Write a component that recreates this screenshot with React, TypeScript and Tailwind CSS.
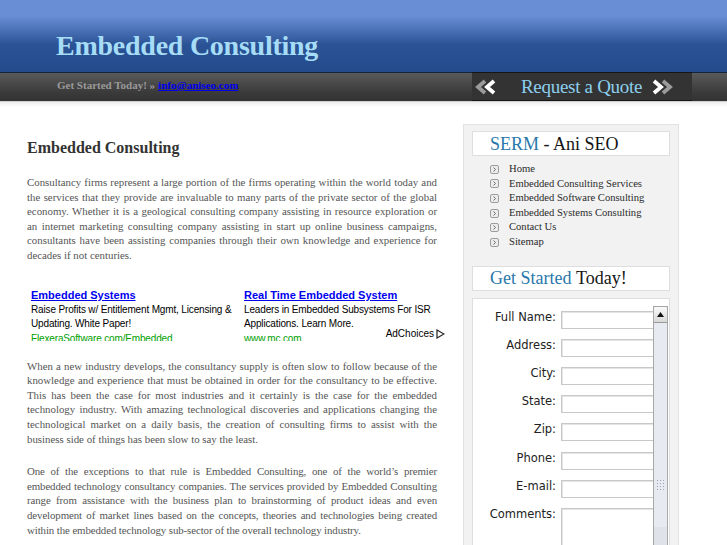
import React from 'react'

const menu = [
  'Home',
  'Embedded Consulting Services',
  'Embedded Software Consulting',
  'Embedded Systems Consulting',
  'Contact Us',
  'Sitemap',
]

const fields = ['Full Name:', 'Address:', 'City:', 'State:', 'Zip:', 'Phone:', 'E-mail:']

function Chevrons({ dir }: { dir: 'left' | 'right' }) {
  return (
    <svg width="24" height="16" viewBox="0 0 24 16" className="shrink-0">
      {dir === 'left' ? (
        <>
          <polyline points="11,2 4,8 11,14" fill="none" stroke="#9a9a9a" strokeWidth="3.8" />
          <polyline points="20,2 13,8 20,14" fill="none" stroke="#ffffff" strokeWidth="3.8" />
        </>
      ) : (
        <>
          <polyline points="13,2 20,8 13,14" fill="none" stroke="#9a9a9a" strokeWidth="3.8" />
          <polyline points="4,2 11,8 4,14" fill="none" stroke="#ffffff" strokeWidth="3.8" />
        </>
      )}
    </svg>
  )
}

function Bullet() {
  return (
    <svg width="9" height="9" viewBox="0 0 9 9" className="shrink-0">
      <rect x="0.5" y="0.5" width="8" height="8" rx="1.5" fill="#ececec" stroke="#9c9c9c" />
      <polyline points="3.5,2.5 5.5,4.5 3.5,6.5" fill="none" stroke="#6a6a6a" strokeWidth="1" />
    </svg>
  )
}

const para = 'text-[10.85px] leading-[14.6px] text-[#555] text-justify'

export default function App() {
  return (
    <div className="min-h-screen bg-white font-['Liberation_Serif',serif] overflow-hidden">
      {/* header */}
      <div className="h-[72px] bg-[linear-gradient(to_bottom,#6a8ed6_0%,#6a8ed6_22%,#2a5395_62%,#244b8c_100%)] flex items-end pl-[56px] pb-[12px]">
        <h1 className="text-[28px] leading-none font-bold text-[#a6dcf6] tracking-[-0.25px]">Embedded Consulting</h1>
      </div>
      <div className="h-px bg-[#15253f]" />
      <div className="h-[28px] bg-[linear-gradient(to_bottom,#5a5a5a,#3a3a3a_70%,#333)] flex items-center justify-between pr-[35px]">
        <div className="pl-[57px] pb-[3px] text-[11px] font-bold text-[#9a9a9a] flex items-center gap-[3px]">
          <span>Get Started Today! »</span>
          <a href="#" className="text-[#0000ee] underline">info@aniseo.com</a>
        </div>
        <div className="w-[220px] h-[29px] -mt-px bg-[#333] border-y border-[#161616] flex items-center pl-[2px]">
          <Chevrons dir="left" />
          <span className="ml-[23px] w-[121px] shrink-0 text-[19px] leading-none text-[#8ccfee] tracking-[-0.3px] whitespace-nowrap">Request a Quote</span>
          <span className="ml-[8px]">
            <Chevrons dir="right" />
          </span>
        </div>
      </div>
      <div className="h-px bg-[#cfcfcf]" />
      <div className="h-[5px] bg-[linear-gradient(to_bottom,#eeeeee,#ffffff)]" />

      {/* body */}
      <div className="flex pl-[27px] gap-[26px] pt-[17px]">
        <div className="w-[410px] shrink-0">
          <h2 className="mt-[14px] text-[16px] leading-[20px] font-bold text-[#333]">Embedded Consulting</h2>
          <p className={`mt-[17px] ${para}`}>
            Consultancy firms represent a large portion of the firms operating within the world today and the services that they provide are invaluable to many parts of the private sector of the global economy. Whether it is a geological consulting company assisting in resource exploration or an internet marketing consulting company assisting in start up online business campaigns, consultants have been assisting companies through their own knowledge and experience for decades if not centuries.
          </p>

          <div className="relative mt-[25px] ml-[4px] w-[414px] h-[53px] overflow-hidden font-['Liberation_Sans',Arial,sans-serif]">
            <div className="grid grid-cols-[213px_1fr]">
              <div className="pr-[4px]">
                <a href="#" className="block text-[11px] leading-[15px] font-bold text-[#0000ee] underline">Embedded Systems</a>
                <div className="text-[10px] leading-[14.5px] text-black tracking-[-0.15px]">Raise Profits w/ Entitlement Mgmt, Licensing &amp; Updating. White Paper!</div>
                <div className="text-[10px] leading-[14.5px] text-[#00a000] tracking-[-0.15px]">FlexeraSoftware.com/Embedded</div>
              </div>
              <div>
                <a href="#" className="block text-[11px] leading-[15px] font-bold text-[#0000ee] underline">Real Time Embedded System</a>
                <div className="text-[10px] leading-[14.5px] text-black tracking-[-0.15px]">Leaders in Embedded Subsystems For ISR Applications. Learn More.</div>
                <div className="text-[10px] leading-[14.5px] text-[#00a000] tracking-[-0.15px]">www.mc.com</div>
              </div>
            </div>
            <div className="absolute right-0 top-[41px] flex items-center gap-[2px] text-[10px] leading-none text-black bg-white pl-[2px]">
              AdChoices
              <svg width="9" height="10" viewBox="0 0 9 10">
                <polygon points="1,1 8,5 1,9" fill="none" stroke="#222" strokeWidth="1.2" />
              </svg>
            </div>
          </div>

          <p className={`mt-[18px] ${para}`}>
            When a new industry develops, the consultancy supply is often slow to follow because of the knowledge and experience that must be obtained in order for the consultancy to be effective. This has been the case for most industries and it certainly is the case for the embedded technology industry. With amazing technological discoveries and applications changing the technological market on a daily basis, the creation of consulting firms to assist with the business side of things has been slow to say the least.
          </p>
          <p className={`mt-[18px] ${para} tracking-[-0.09px]`}>
            One of the exceptions to that rule is Embedded Consulting, one of the world’s premier embedded technology consultancy companies. The services provided by Embedded Consulting range from assistance with the business plan to brainstorming of product ideas and even development of market lines based on the concepts, theories and technologies being created within the embedded technology sub-sector of the overall technology industry.
          </p>
        </div>

        {/* sidebar */}
        <div className="w-[216px] shrink-0 bg-[#f2f2f2] border border-[#e2e2e2] px-[8px] pt-[6px] pb-[20px]">
          <div className="h-[25px] bg-white border border-[#dedede] pl-[17px] flex items-center text-[18px] leading-none">
            <span className="text-[#2a78ab]">SERM</span>
            <span className="text-[#151515]">&nbsp;- Ani SEO</span>
          </div>
          <ul className="mt-[6px] pl-[18px]">
            {menu.map((m) => (
              <li key={m} className="flex items-center gap-[10px] text-[10.6px] leading-[14.6px] text-[#2a2a2a]">
                <Bullet />
                <span>{m}</span>
              </li>
            ))}
          </ul>
          <div className="mt-[16px] h-[25px] bg-white border border-[#dedede] pl-[17px] flex items-center text-[18px] leading-none">
            <span className="text-[#2a78ab]">Get Started</span>
            <span className="text-[#151515]">&nbsp;Today!</span>
          </div>
          <div className="mt-[7px] bg-white border border-[#dedede] pt-[7px] pr-px">
            <div className="flex">
              <div className="flex-1 overflow-hidden pt-[5px] font-['DejaVu_Sans',sans-serif]">
                {fields.map((f) => (
                  <div key={f} className="flex items-start h-[28.2px]">
                    <label className="w-[83px] shrink-0 text-right text-[11.5px] leading-[12px] text-[#222]">{f}</label>
                    <input className="ml-[5px] w-[110px] h-[18px] shrink-0 border border-[#c8c8c8] shadow-[inset_1px_1px_0_#e4e4e4] bg-white" />
                  </div>
                ))}
                <div className="flex items-start h-[60px]">
                  <label className="w-[83px] shrink-0 text-right text-[11.5px] leading-[12px] text-[#222]">Comments:</label>
                  <textarea className="ml-[5px] w-[110px] h-[60px] shrink-0 border border-[#c8c8c8] shadow-[inset_1px_1px_0_#e4e4e4] resize-none" />
                </div>
              </div>
              <div className="w-[15px] shrink-0 border border-[#a8a8a8] bg-[linear-gradient(to_right,#dcdfe8,#eceef4,#dcdfe8)] flex flex-col">
                <div className="h-[16px] border-b border-[#9a9a9a] rounded-t-[2px] bg-[linear-gradient(to_bottom,#fafafa,#d8d8d8)] flex items-center justify-center">
                  <svg width="7" height="5" viewBox="0 0 7 5">
                    <polygon points="0,5 3.5,0 7,5" fill="#111" />
                  </svg>
                </div>
                <div className="flex-1 bg-[#e8eaf1] flex flex-col items-center pt-[157px]">
                  <div className="grid grid-cols-3 gap-[2px]">
                    {Array.from({ length: 12 }).map((_, i) => (
                      <div key={i} className="w-px h-px bg-[#a0a3ab]" />
                    ))}
                  </div>
                </div>
                <div className="h-[40px] bg-[#e0e2ea]" />
              </div>
            </div>
          </div>
        </div>
      </div>
    </div>
  )
}
